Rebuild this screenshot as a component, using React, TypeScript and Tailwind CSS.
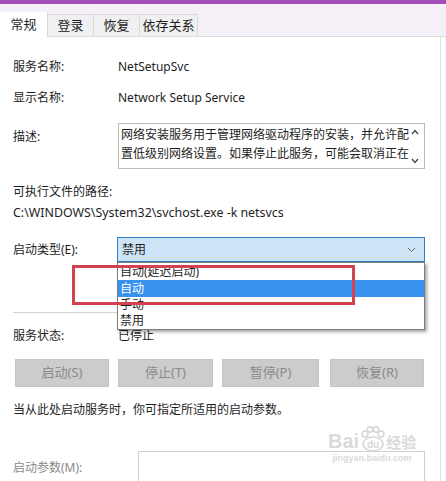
export default function App() {
  const font = { fontFamily: '"Noto Sans", "Noto Sans CJK SC", sans-serif' };
  return (
    <div className="relative flex h-[481px] w-[446px] flex-col overflow-hidden bg-white text-[12px] text-[#1e1e1e]" style={font}>
      {/* window top */}
      <div className="h-[4px] shrink-0 bg-[#a34db8]" />
      <div className="flex h-[33px] shrink-0 items-end border-b border-[#dcdcdc] bg-[#f5eff7]">
        <div className="relative top-[1px] flex h-[25px] w-[48px] items-center justify-center border-r border-[#d9d9d9] bg-white text-[13px]">
          常规
        </div>
        <div className="flex h-[22px] w-[46px] items-center justify-center border-r border-t border-[#dadada] bg-[#f0f0f0] text-[13px]">
          登录
        </div>
        <div className="flex h-[22px] w-[46px] items-center justify-center border-r border-t border-[#dadada] bg-[#f0f0f0] text-[13px]">
          恢复
        </div>
        <div className="flex h-[22px] w-[58px] items-center justify-center border-r border-t border-[#dadada] bg-[#f0f0f0] text-[13px]">
          依存关系
        </div>
      </div>

      {/* panel */}
      <div className="flex w-[441px] shrink-0 flex-col border-r border-[#e2e2e2] pb-[10px] pl-[13px] pr-[15px] [&>*]:shrink-0">
        <div className="mt-[19px] flex h-[22px] items-center">
          <span className="w-[105px]">服务名称:</span>
          <span>NetSetupSvc</span>
        </div>
        <div className="mt-[9px] flex h-[22px] items-center">
          <span className="w-[105px]">显示名称:</span>
          <span>Network Setup Service</span>
        </div>
        <div className="mt-[14px] flex">
          <span className="mt-[5px] w-[105px]">描述:</span>
          <div className="flex h-[46px] flex-1 border border-[#b9b9b9] pl-[2px] pr-[3px] pt-[1px] leading-[19px]">
            <div className="flex-1">
              <div>网络安装服务用于管理网络驱动程序的安装，并允许配</div>
              <div>置低级别网络设置。如果停止此服务，可能会取消正在</div>
            </div>
            <div className="flex w-[12px] flex-col items-center justify-between py-[4px]">
              <svg width="8" height="6" viewBox="0 0 8 6"><path d="M1 5 L4 1.5 L7 5" fill="none" stroke="#444" strokeWidth="1.3" /></svg>
              <svg width="8" height="6" viewBox="0 0 8 6"><path d="M1 1 L4 4.5 L7 1" fill="none" stroke="#444" strokeWidth="1.3" /></svg>
            </div>
          </div>
        </div>
        <div className="mt-[13px] flex h-[20px] items-center">可执行文件的路径:</div>
        <div className="mt-[1px] flex h-[20px] items-center text-[12.4px]">C:\WINDOWS\System32\svchost.exe -k netsvcs</div>

        <div className="mt-[14px] flex h-[25px] items-center">
          <span className="w-[104px]">启动类型(E):</span>
          <div className="flex h-[25px] flex-1 items-center justify-between border border-[#2f7fc4] bg-[#cde4f7] pl-[4px] pr-[8px]">
            <span>禁用</span>
            <svg width="9" height="6" viewBox="0 0 9 6"><path d="M1 1 L4.5 4.5 L8 1" fill="none" stroke="#6a6a6a" strokeWidth="1" /></svg>
          </div>
        </div>

        <div className="mt-[50px] h-[1px] bg-[#d4d4d4]" />

        <div className="mt-[12px] flex h-[22px] items-center">
          <span className="w-[105px]">服务状态:</span>
          <span>已停止</span>
        </div>

        <div className="mt-[12px] flex h-[28px] gap-[9px] pl-[2px] text-[13px] text-[#8a8a8a]">
          <div className="flex w-[94px] items-center justify-center border border-[#c6c6c6] bg-[#cccccc]">启动(S)</div>
          <div className="flex w-[95px] items-center justify-center border border-[#c6c6c6] bg-[#cccccc]">停止(T)</div>
          <div className="flex w-[97px] items-center justify-center border border-[#c6c6c6] bg-[#cccccc]">暂停(P)</div>
          <div className="ml-[2px] flex w-[94px] items-center justify-center border border-[#c6c6c6] bg-[#cccccc]">恢复(R)</div>
        </div>

        <div className="mt-[12px] flex h-[22px] items-center">当从此处启动服务时，你可指定所适用的启动参数。</div>

        <div className="mt-[30px] flex">
          <span className="mt-[8px] w-[125px] text-[#8a8a8a]">启动参数(M):</span>
          <div className="h-[40px] flex-1 border border-[#cfcfcf]" />
        </div>
      </div>

      {/* open dropdown list */}
      <div className="absolute left-[117px] top-[262px] w-[308px] border border-[#7f7f7f] bg-white shadow-[2px_2px_3px_rgba(0,0,0,0.35)]">
        <div className="flex h-[17px] items-center pl-[2px]">自动(延迟启动)</div>
        <div className="flex h-[17px] items-center bg-[#3a92ef] pl-[2px] text-white">自动</div>
        <div className="flex h-[16px] items-center pl-[2px]">手动</div>
        <div className="flex h-[16px] items-center pl-[2px]">禁用</div>
      </div>

      {/* red highlight box */}
      <div className="absolute left-[72px] top-[265px] h-[40px] w-[283px] border-[3px] border-[#d2434f]" />

      {/* watermark */}
      <div className="absolute left-[328px] top-[426px] flex flex-col items-center text-[#dadada]">
        <div className="flex items-end">
          <span className="text-[20px] font-bold leading-[20px]" style={{ fontFamily: '"Liberation Sans", sans-serif' }}>Bai</span>
          <svg width="26" height="26" viewBox="0 0 26 26" className="-mb-[1px]">
            <circle cx="6" cy="8" r="3" fill="none" stroke="#d6d6d6" strokeWidth="1.5" />
            <circle cx="11" cy="3.5" r="2.7" fill="none" stroke="#d6d6d6" strokeWidth="1.5" />
            <circle cx="17" cy="3.5" r="2.7" fill="none" stroke="#d6d6d6" strokeWidth="1.5" />
            <circle cx="22" cy="8" r="3" fill="none" stroke="#d6d6d6" strokeWidth="1.5" />
            <ellipse cx="14" cy="18" rx="10" ry="7" fill="none" stroke="#d6d6d6" strokeWidth="1.5" />
            <text x="14" y="22" textAnchor="middle" fontSize="10" fontWeight="bold" fill="#d6d6d6" fontFamily="Liberation Sans">du</text>
          </svg>
          <span className="ml-[1px] text-[15px] font-bold leading-[18px]">经验</span>
        </div>
        <span className="text-[9px] font-bold leading-[14px]" style={{ fontFamily: '"Liberation Sans", sans-serif' }}>jingyan.baidu.com</span>
      </div>
    </div>
  );
}
